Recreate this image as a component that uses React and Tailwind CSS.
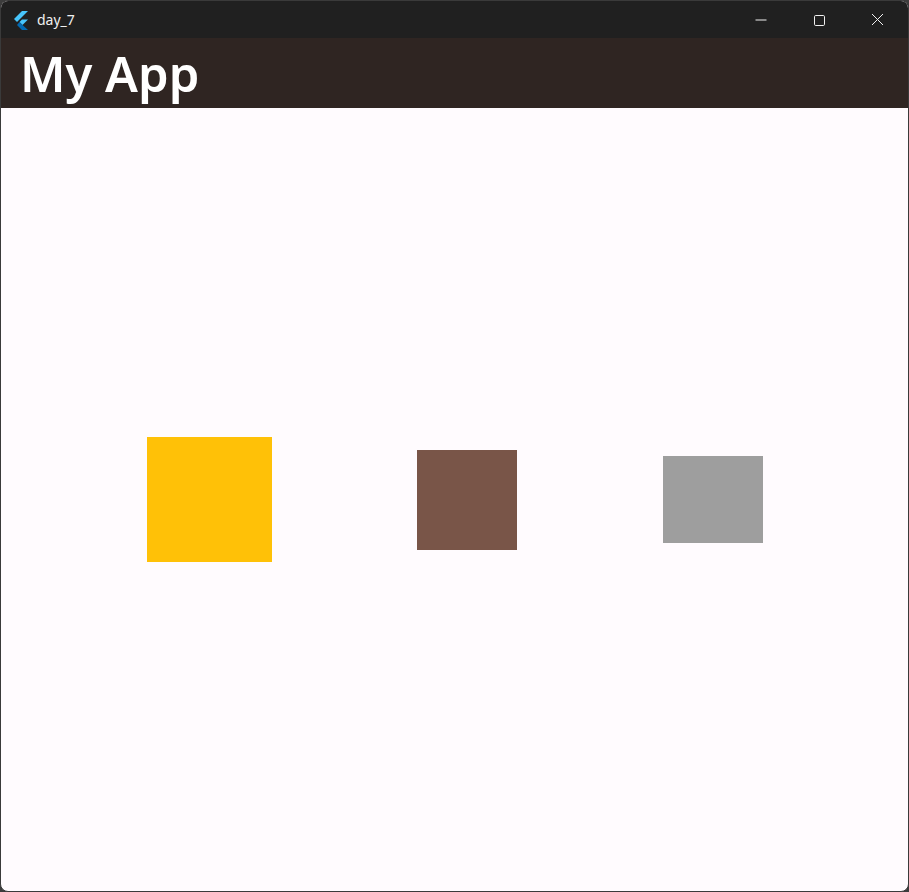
const FlutterLogo = () => (
  <svg width="18" height="20" viewBox="0 0 18 20">
    <path d="M11 1 L17 1 L6 12 L3 9 Z" fill="#47c5fb" />
    <path d="M11 9.5 L17 9.5 L11.5 15 L8.5 12 Z" fill="#47c5fb" />
    <path d="M8.5 12 L11.5 15 L17 20 L11 20 L6 15 Z" fill="#0269b1" />
  </svg>
);

const App = () => {
  return (
    <div className="w-[909px] h-[892px] bg-[#3c3c3c] overflow-hidden">
      <div className="w-full h-full flex flex-col rounded-lg overflow-hidden border border-[#3a3a3a] bg-[#fffbfe]">
        {/* Title bar */}
        <div className="h-[37px] shrink-0 bg-[#202020] flex items-center" style={{ fontFamily: '"Noto Sans", sans-serif' }}>
          <div className="pl-[10px] pr-[8px] flex items-center">
            <FlutterLogo />
          </div>
          <span className="text-[14px] text-[#f0f0f0]">day_7</span>
          <div className="ml-auto pr-[2px] flex h-full text-white">
            <div className="w-[58px] flex items-center justify-center">
              <svg width="12" height="12" viewBox="0 0 12 12">
                <path d="M0.5 6 H11.5" stroke="#f0f0f0" strokeWidth="1" />
              </svg>
            </div>
            <div className="w-[58px] flex items-center justify-center">
              <svg width="12" height="12" viewBox="0 0 12 12">
                <rect x="1.5" y="1.5" width="10" height="10" rx="1.2" fill="none" stroke="#f0f0f0" strokeWidth="1" />
              </svg>
            </div>
            <div className="w-[58px] flex items-center justify-center">
              <svg width="13" height="13" viewBox="0 0 13 13">
                <path d="M1 1 L12 12 M12 1 L1 12" stroke="#f0f0f0" strokeWidth="1" />
              </svg>
            </div>
          </div>
        </div>

        {/* App bar */}
        <div className="h-[70px] shrink-0 bg-[#2f2522] flex items-center px-[19px]">
          <h1
            className="text-[49px] font-semibold text-white leading-none"
            style={{ fontFamily: '"Noto Sans", sans-serif' }}
          >
            My App
          </h1>
        </div>

        {/* Body */}
        <div className="flex-1 flex items-center justify-evenly">
          <div className="w-[125px] h-[125px] bg-[#ffc107]" />
          <div className="w-[100px] h-[100px] bg-[#795548]" />
          <div className="w-[100px] h-[87px] bg-[#9e9e9e]" />
        </div>
      </div>
    </div>
  );
};

export default App;
